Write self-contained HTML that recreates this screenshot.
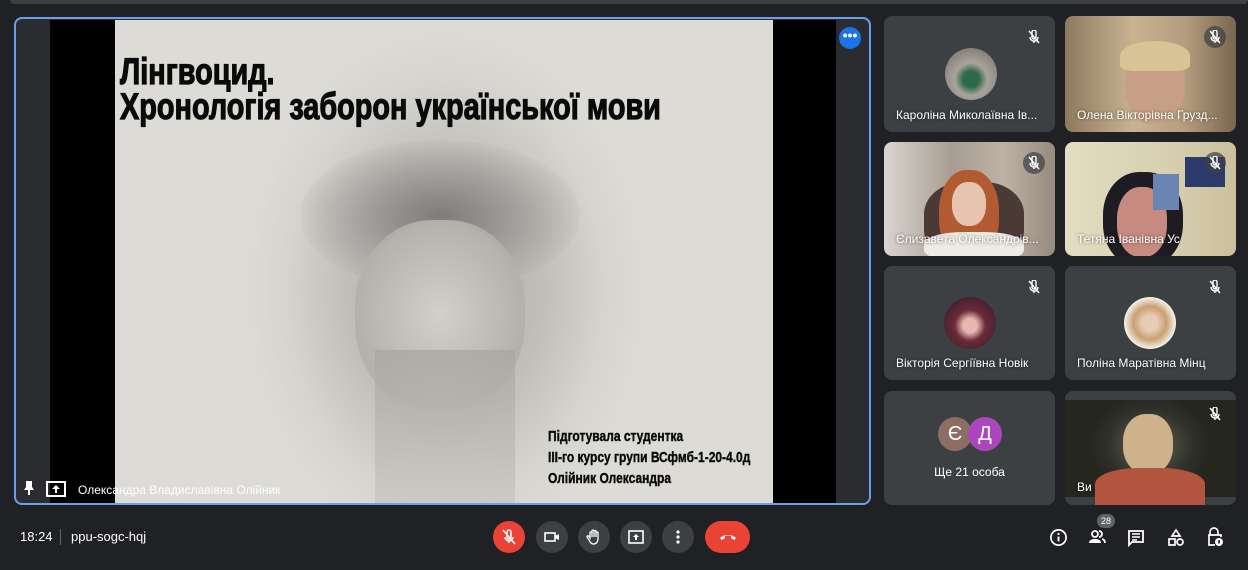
<!DOCTYPE html>
<html><head><meta charset="utf-8"><style>
*{margin:0;padding:0;box-sizing:border-box}
body{width:1254px;height:570px;background:#202124;position:relative;overflow:hidden;font-family:"Liberation Sans",sans-serif;color:#fff}
.abs{position:absolute}
.tile{position:absolute;background:#3c4043;border-radius:8px;overflow:hidden}
.nm{position:absolute;left:12px;bottom:10px;font-size:12px;color:#fff;white-space:nowrap;text-shadow:0 0 3px rgba(0,0,0,.6)}
.mic{position:absolute;right:10px;top:10px;width:22px;height:22px;border-radius:50%;background:rgba(60,64,67,.7)}
.mic svg{position:absolute;left:4px;top:4px}
.nar{font-family:"Liberation Sans",sans-serif;font-weight:bold;color:#0a0a0a;white-space:nowrap;transform-origin:left top}
.btn{position:absolute;top:521px;width:32px;height:32px;border-radius:50%;background:#3c4043}
.btn svg{position:absolute;left:7px;top:7px}
</style></head><body>
<div class="abs" style="left:10px;top:0;width:1238px;height:4px;background:#3c4043;border-radius:0 0 4px 4px"></div>
<div class="abs" style="left:1248px;top:0;width:6px;height:570px;background:#fff"></div>

<div class="abs" style="left:14px;top:17px;width:857px;height:488px;border:2px solid #6a9ff0;border-radius:8px;background:#2b2c2f;overflow:hidden">
  <div class="abs" style="left:34px;top:1px;width:786px;height:484px;background:#000"></div>
  <div class="abs" style="left:99px;top:1px;width:658px;height:484px;background:radial-gradient(ellipse 200px 260px at 330px 270px,#a9a7a2 0%,#c1bfba 50%,#d6d4cf 80%,#dddbd6 100%)">
    <div class="abs" style="left:185px;top:120px;width:280px;height:150px;border-radius:50%;background:radial-gradient(ellipse,rgba(90,88,85,.6) 0%,rgba(140,138,134,.3) 55%,transparent 75%)"></div>
    <div class="abs" style="left:240px;top:200px;width:170px;height:190px;border-radius:45%;background:radial-gradient(ellipse,#d2d0cb 0%,#b3b1ac 70%,transparent 85%)"></div>
    <div class="abs" style="left:260px;top:330px;width:140px;height:154px;background:linear-gradient(#a9a7a2,#c9c7c2);opacity:.8"></div>
    <div class="nar abs" style="left:5px;top:34px;font-size:37px;line-height:36px;transform:scaleX(.78);-webkit-text-stroke:1.2px #0a0a0a">Лінгвоцид.</div>
    <div class="nar abs" style="left:5px;top:69px;font-size:37px;line-height:36px;transform:scaleX(.78);-webkit-text-stroke:1.2px #0a0a0a">Хронологія заборон української мови</div>
    <div class="nar abs" style="left:433px;top:406px;font-size:15px;line-height:21px;transform:scaleX(.8);-webkit-text-stroke:.4px #0a0a0a">Підготувала студентка<br>ІІІ-го курсу групи ВСфмб-1-20-4.0д<br>Олійник Олександра</div>
  </div>
  <div class="abs" style="left:823px;top:8px;width:22px;height:22px;border-radius:50%;background:#1a73e8;text-align:center;font-size:14px;line-height:16px;font-weight:bold">•••</div>
  <svg class="abs" style="left:6px;top:461px" width="14" height="16" viewBox="0 0 14 16"><path d="M4 1h6v6l2 3H8v5H6v-5H2l2-3z" fill="#fff"/></svg>
  <svg class="abs" style="left:30px;top:462px" width="20" height="16" viewBox="0 0 20 16"><rect x="1" y="1" width="18" height="14" fill="none" stroke="#fff" stroke-width="2"/><path d="M10 4l-4 4h3v4h2V8h3z" fill="#fff"/></svg>
  <div class="abs" style="left:62px;top:464px;font-size:12px">Олександра Владиславівна Олійник</div>
</div>

<div class="tile" style="left:884px;top:16px;width:171px;height:116px">
  <div class="abs" style="left:61px;top:32px;width:52px;height:52px;border-radius:50%;background:radial-gradient(circle at 50% 60%,#2e6a4a 0 20%,#a9a49b 40%,#6e6a65 100%)"></div>
  <div class="mic"><svg width="14" height="14" viewBox="0 0 14 14"><path d="M5 2a2 2 0 014 0v5a2 2 0 01-4 0zM3 7a4 4 0 008 0M7 11v2M2 1l10 12" stroke="#fff" stroke-width="1.4" fill="none"/></svg></div>
  <div class="nm">Кароліна Миколаївна Ів...</div>
</div>
<div class="tile" style="left:1065px;top:16px;width:171px;height:116px;background:linear-gradient(90deg,#8d7a5e,#c8b391 40%,#b49d7d 70%,#7a6650)">
  <div class="abs" style="left:60px;top:28px;width:60px;height:80px;border-radius:45%;background:#c79f85"></div>
  <div class="abs" style="left:55px;top:25px;width:70px;height:30px;border-radius:50% 50% 20% 20%;background:#d8c495"></div>
  <div class="mic"><svg width="14" height="14" viewBox="0 0 14 14"><path d="M5 2a2 2 0 014 0v5a2 2 0 01-4 0zM3 7a4 4 0 008 0M7 11v2M2 1l10 12" stroke="#fff" stroke-width="1.4" fill="none"/></svg></div>
  <div class="nm">Олена Вікторівна Грузд...</div>
</div>
<div class="tile" style="left:884px;top:142px;width:171px;height:114px;background:linear-gradient(90deg,#d8d5cf,#a89d92 40%,#bdb2a5 70%,#978a7e)">
  <div class="abs" style="left:40px;top:40px;width:100px;height:80px;border-radius:40%;background:#4a3a35"></div>
  <div class="abs" style="left:55px;top:28px;width:60px;height:90px;border-radius:45%;background:#b25a32"></div>
  <div class="abs" style="left:68px;top:40px;width:34px;height:44px;border-radius:45%;background:#e7c4b0"></div>
  <div class="abs" style="left:40px;top:90px;width:100px;height:30px;border-radius:40%;background:#efebe6"></div>
  <div class="mic"><svg width="14" height="14" viewBox="0 0 14 14"><path d="M5 2a2 2 0 014 0v5a2 2 0 01-4 0zM3 7a4 4 0 008 0M7 11v2M2 1l10 12" stroke="#fff" stroke-width="1.4" fill="none"/></svg></div>
  <div class="nm">Єлизавета Олександрів...</div>
</div>
<div class="tile" style="left:1065px;top:142px;width:171px;height:114px;background:linear-gradient(90deg,#e3ddc2,#d7cfb0 60%,#cbbf9c)">
  <div class="abs" style="left:38px;top:30px;width:80px;height:95px;border-radius:45%;background:#1e1b22"></div>
  <div class="abs" style="left:52px;top:45px;width:50px;height:70px;border-radius:45%;background:#c78a80"></div>
  <div class="abs" style="left:120px;top:15px;width:40px;height:30px;background:#2b3a6b"></div>
  <div class="abs" style="left:88px;top:32px;width:26px;height:36px;background:#6a85b4"></div>
  <div class="mic"><svg width="14" height="14" viewBox="0 0 14 14"><path d="M5 2a2 2 0 014 0v5a2 2 0 01-4 0zM3 7a4 4 0 008 0M7 11v2M2 1l10 12" stroke="#fff" stroke-width="1.4" fill="none"/></svg></div>
  <div class="nm">Тетяна Іванівна Ус</div>
</div>
<div class="tile" style="left:884px;top:266px;width:171px;height:114px">
  <div class="abs" style="left:60px;top:31px;width:52px;height:52px;border-radius:50%;background:radial-gradient(circle at 50% 55%,#e8b7b0 0 18%,#6b2a3a 40%,#2a1a25 100%)"></div>
  <div class="mic"><svg width="14" height="14" viewBox="0 0 14 14"><path d="M5 2a2 2 0 014 0v5a2 2 0 01-4 0zM3 7a4 4 0 008 0M7 11v2M2 1l10 12" stroke="#fff" stroke-width="1.4" fill="none"/></svg></div>
  <div class="nm">Вікторія Сергіївна Новік</div>
</div>
<div class="tile" style="left:1065px;top:266px;width:171px;height:114px">
  <div class="abs" style="left:59px;top:31px;width:52px;height:52px;border-radius:50%;background:radial-gradient(circle at 50% 50%,#e8cdb6 0 20%,#c9a070 45%,#f4f1ec 70%)"></div>
  <div class="mic"><svg width="14" height="14" viewBox="0 0 14 14"><path d="M5 2a2 2 0 014 0v5a2 2 0 01-4 0zM3 7a4 4 0 008 0M7 11v2M2 1l10 12" stroke="#fff" stroke-width="1.4" fill="none"/></svg></div>
  <div class="nm">Поліна Маратівна Мінц</div>
</div>
<div class="tile" style="left:884px;top:391px;width:171px;height:114px">
  <div class="abs" style="left:54px;top:26px;width:34px;height:34px;border-radius:50%;background:#8d6e63;font-size:20px;text-align:center;line-height:34px">Є</div>
  <div class="abs" style="left:84px;top:26px;width:34px;height:34px;border-radius:50%;background:#ab47bc;font-size:20px;text-align:center;line-height:34px">Д</div>
  <div class="abs" style="left:0;top:74px;width:171px;text-align:center;font-size:12px">Ще 21 особа</div>
</div>
<div class="tile" style="left:1065px;top:391px;width:171px;height:114px">
  <div class="abs" style="left:0;top:9px;width:171px;height:97px;background:radial-gradient(ellipse 60px 50px at 85px 45px,#6b6650,#2f312b 70%,#25271f)">
    <div class="abs" style="left:58px;top:14px;width:50px;height:60px;border-radius:45%;background:#cdb28c"></div>
    <div class="abs" style="left:30px;top:68px;width:110px;height:40px;border-radius:40% 40% 0 0;background:#b2543e"></div>
  </div>
  <div class="mic" style="top:12px;background:none"><svg width="14" height="14" viewBox="0 0 14 14"><path d="M5 2a2 2 0 014 0v5a2 2 0 01-4 0zM3 7a4 4 0 008 0M7 11v2M2 1l10 12" stroke="#fff" stroke-width="1.4" fill="none"/></svg></div>
  <div class="nm" style="bottom:11px">Ви</div>
</div>

<div class="abs" style="left:20px;top:529px;font-size:13px">18:24</div>
<div class="abs" style="left:60px;top:529px;width:1px;height:16px;background:#5f6368"></div>
<div class="abs" style="left:71px;top:529px;font-size:13px">ppu-sogc-hqj</div>

<div class="btn" style="left:493px;background:#ea4335"><svg width="18" height="18" viewBox="0 0 18 18"><path d="M7 4a2 2 0 014 0v5a2 2 0 01-4 0zM5 9a4 4 0 008 0M9 13v2M3 2l12 14" stroke="#fff" stroke-width="1.5" fill="none"/></svg></div>
<div class="btn" style="left:536px"><svg width="18" height="18" viewBox="0 0 18 18"><rect x="2" y="5" width="10" height="8" fill="none" stroke="#fff" stroke-width="1.6"/><path d="M12 8l4-2v6l-4-2z" fill="#fff"/></svg></div>
<div class="btn" style="left:578px"><svg width="18" height="18" viewBox="0 0 18 18"><path d="M5 10V5a1 1 0 012 0v4V3a1 1 0 012 0v6V3.5a1 1 0 012 0V9V5a1 1 0 012 0v6c0 3-2 5-4.5 5S5 14 4 12l-2-3a1 1 0 011.6-1z" fill="none" stroke="#fff" stroke-width="1.3"/></svg></div>
<div class="btn" style="left:620px"><svg width="18" height="18" viewBox="0 0 18 18"><rect x="2" y="3" width="14" height="12" fill="none" stroke="#fff" stroke-width="1.6"/><path d="M9 6l-3 3h2v3h2V9h2z" fill="#fff"/></svg></div>
<div class="btn" style="left:662px"><svg width="18" height="18" viewBox="0 0 18 18"><circle cx="9" cy="4" r="1.6" fill="#fff"/><circle cx="9" cy="9" r="1.6" fill="#fff"/><circle cx="9" cy="14" r="1.6" fill="#fff"/></svg></div>
<div class="btn" style="left:705px;width:45px;border-radius:16px;background:#ea4335"><svg style="left:13px" width="20" height="18" viewBox="0 0 20 18"><path d="M2 10c4-4 12-4 16 0l-2 2-3-2V8c-2-.6-4-.6-6 0v2l-3 2z" fill="#fff"/></svg></div>

<svg class="abs" style="left:1049px;top:528px" width="19" height="19" viewBox="0 0 20 20"><circle cx="10" cy="10" r="8" fill="none" stroke="#fff" stroke-width="1.8"/><rect x="9" y="9" width="2" height="5" fill="#fff"/><circle cx="10" cy="6.3" r="1.2" fill="#fff"/></svg>
<div class="abs" style="left:1097px;top:514px;width:18px;height:14px;border-radius:7px;background:#5f6368;font-size:9px;text-align:center;line-height:14px">28</div>
<svg class="abs" style="left:1087px;top:529px" width="20" height="16" viewBox="0 0 20 16"><circle cx="8" cy="5" r="3" fill="none" stroke="#fff" stroke-width="1.8"/><path d="M2 14c0-3 3-4 6-4s6 1 6 4z" fill="#fff"/><path d="M12 2a3 3 0 010 6M15 10c2 .5 3 2 3 4" fill="none" stroke="#fff" stroke-width="1.8"/></svg>
<svg class="abs" style="left:1127px;top:529px" width="18" height="18" viewBox="0 0 18 18"><path d="M2 2h14v11H5l-3 3z" fill="none" stroke="#fff" stroke-width="1.8"/><path d="M5 5h8M5 8h8M5 11h5" stroke="#fff" stroke-width="1.4"/></svg>
<svg class="abs" style="left:1167px;top:528px" width="18" height="19" viewBox="0 0 18 19"><path d="M9 2l4 6H5z" fill="none" stroke="#fff" stroke-width="1.7"/><rect x="2" y="11" width="6" height="6" fill="none" stroke="#fff" stroke-width="1.7"/><circle cx="13" cy="14" r="3" fill="none" stroke="#fff" stroke-width="1.7"/></svg>
<svg class="abs" style="left:1206px;top:527px" width="18" height="20" viewBox="0 0 18 20"><path d="M4 8V5a4 4 0 018 0v3" fill="none" stroke="#fff" stroke-width="1.7"/><path d="M9 18H3V8h12v2" fill="none" stroke="#fff" stroke-width="1.7"/><circle cx="13" cy="15" r="4" fill="#fff"/><rect x="12.2" y="13" width="1.6" height="3.5" fill="#202124"/></svg>
</body></html>
